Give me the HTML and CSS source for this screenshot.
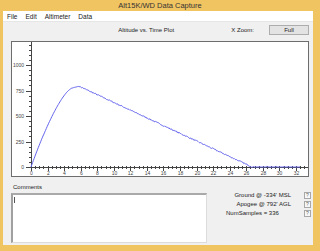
FILE: index.html
```html
<!DOCTYPE html>
<html lang="en">
<head>
    <meta charset="UTF-8">
    <title>Alt15K/WD Data Capture</title>
    <link rel="stylesheet" href="styles.css">
</head>
<body>
<div class="window">
    <div class="titlebar">Alt15K/WD Data Capture</div>
    <div class="menubar">
        <span>File</span>
        <span>Edit</span>
        <span>Altimeter</span>
        <span>Data</span>
    </div>
    <div class="client">
        <div class="plot-head">
            <span class="plot-title">Altitude vs. Time Plot</span>
            <span class="zoom-label">X Zoom:</span>
            <div class="btn">Full</div>
        </div>
        <div class="plot">
            <svg width="296" height="134" viewBox="0 0 296 134"></svg>
        </div>
        <div class="bottom">
            <div class="comments">
                <div class="comments-label">Comments</div>
                <div class="comments-box"><span class="caret"></span></div>
            </div>
            <div class="stats">
                <span class="stat right">Ground @ -334' MSL</span>
                <span class="help">?</span>
                <span class="stat right">Apogee @ 792' AGL</span>
                <span class="help">?</span>
                <span class="stat">NumSamples = 336</span>
                <span class="help">?</span>
            </div>
        </div>
    </div>
</div>

<script>
    const svg = document.querySelector('.plot svg');
    const ox = 19, oy = 125;      // origin inside the plot
    const sx = 8.28, sy = 0.102;  // px per second, px per foot

    let axes = `M${ox + 0.5} 0V${oy + 1}M${ox} ${oy + 0.5}H296`;
    let labels = '';

    // altitude ticks
    for (let v = 0; v <= 1200; v += 50) {
        const y = Math.round(oy - v * sy) + 0.5;
        const major = v % 250 === 0;
        axes += `M${ox - (major ? 5 : 2)} ${y}H${ox + 1}`;
        if (major) {
            labels += `<text x="${ox - 7}" y="${y + 1.8}" text-anchor="end">${v}</text>`;
        }
    }

    // time ticks
    for (let s = 0; s <= 33; s += 0.5) {
        const x = Math.round(ox + s * sx) + 0.5;
        if (x > 295) break;
        const major = s % 2 === 0;
        axes += `M${x} ${oy - 1}V${oy + (major ? 4 : 2)}`;
        if (major) {
            labels += `<text x="${x}" y="${oy + 8}" text-anchor="middle">${s}</text>`;
        }
    }

    // flight samples
    let seed = 7;
    function rnd() {
        seed = (seed * 16807) % 2147483647;
        return seed / 2147483647 - 0.5;
    }
    const pts = [];
    for (let i = 0; i < 336; i++) {
        const t = i * 0.097;
        let h;
        if (t <= 5.0) {
            h = 775 * (1 - Math.pow(1 - t / 5.0, 1.45));
        } else if (t <= 5.8) {
            h = 775 + (t - 5.0) * 21;
        } else if (t <= 26.7) {
            h = 792 * (1 - (t - 5.8) / 20.9) + rnd() * 12;
        } else {
            h = rnd() > 0.4 ? 5 : 0;
        }
        pts.push(`${(ox + t * sx).toFixed(1)},${(oy - h * sy).toFixed(1)}`);
    }

    svg.innerHTML =
        `<path class="axis" d="${axes}"/>` +
        `<g class="labels">${labels}</g>` +
        `<polyline class="curve" points="${pts.join(' ')}"/>`;
</script>
</body>
</html>
```

FILE: styles.css
```css
html, body {
    margin: 0;
    height: 100%;
}
body {
    background: #f1c462;
    font-family: "Liberation Sans", Arial, sans-serif;
    color: #222;
    overflow: hidden;
}
.window {
    display: flex;
    flex-direction: column;
    width: 320px;
    height: 251px;
}
.titlebar {
    height: 11px;
    line-height: 11px;
    text-align: center;
    font-size: 7.5px;
    color: #333;
}
.menubar {
    height: 11px;
    margin: 0 7px 0 3px;
    padding-left: 4px;
    background: #fff;
    display: flex;
    align-items: center;
    gap: 8px;
    font-size: 6.5px;
    border-bottom: 1px solid #e6e6e6;
    box-sizing: border-box;
}
.client {
    flex: 1;
    margin: 0 7px 6px 3px;
    padding: 0 4px 0 8px;
    background: #f0f0f0;
    display: flex;
    flex-direction: column;
}
.plot-head {
    display: flex;
    align-items: center;
    padding: 3px 0 6px;
    font-size: 6px;
}
.plot-title {
    flex: 1;
    text-align: center;
    padding-left: 50px;
}
.zoom-label {
    margin-right: 15px;
}
.btn {
    width: 40px;
    height: 10px;
    box-sizing: border-box;
    border: 1px solid #adadad;
    background: #e3e3e3;
    text-align: center;
    line-height: 8px;
    font-size: 6px;
}
.plot {
    height: 136px;
    box-sizing: border-box;
    border: 1px solid #6d6d6d;
    background: #fff;
}
.plot svg {
    display: block;
}
.axis {
    stroke: #444;
    stroke-width: 1;
    fill: none;
}
.labels {
    font-size: 5px;
    fill: #444;
}
.curve {
    fill: none;
    stroke: #6464ee;
    stroke-width: 1;
}
.bottom {
    flex: 1;
    display: flex;
}
.comments {
    width: 196px;
}
.comments-label {
    margin-top: 6px;
    padding-left: 2px;
    height: 8px;
    line-height: 8px;
    font-size: 6px;
}
.comments-box {
    margin-top: 2px;
    height: 50px;
    box-sizing: border-box;
    background: #fff;
    border: 1px solid #dcdcdc;
    border-top: 2px solid #a9a9a9;
    border-left: 2px solid #a0a0a0;
    padding: 2px 0 0 1px;
}
.caret {
    display: block;
    width: 1px;
    height: 6px;
    background: #555;
}
.stats {
    margin: 15px -2px 0 auto;
    display: grid;
    grid-template-columns: 65px 7px;
    grid-auto-rows: 7px;
    column-gap: 13px;
    row-gap: 2px;
    align-content: start;
    font-size: 6px;
}
.stat {
    line-height: 7px;
    white-space: nowrap;
}
.stat.right {
    justify-self: end;
}
.help {
    box-sizing: border-box;
    border: 1px solid #a8a8a8;
    background: #f7f7f7;
    color: #666;
    font-size: 5px;
    line-height: 5px;
    text-align: center;
}
```
